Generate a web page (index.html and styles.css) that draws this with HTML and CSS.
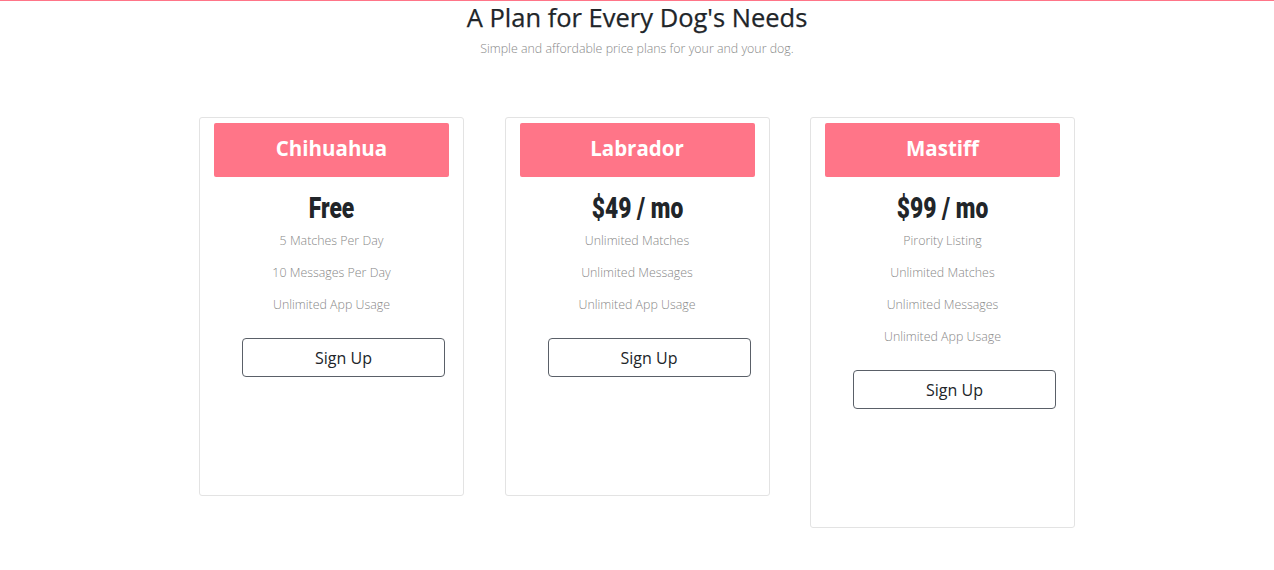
FILE: index.html
```html
<!DOCTYPE html>
<html lang="en">
<head>
<meta charset="utf-8">
<title>Pricing</title>
<link rel="stylesheet" href="styles.css">
</head>
<body>
<div class="topline"></div>
<section class="pricing">
  <h1 class="title">A Plan for Every Dog's Needs</h1>
  <p class="subtitle">Simple and affordable price plans for your and your dog.</p>
  <div class="cards">
    <div class="card">
      <div class="card-head">Chihuahua</div>
      <div class="price">Free</div>
      <ul class="features">
        <li>5 Matches Per Day</li>
        <li>10 Messages Per Day</li>
        <li>Unlimited App Usage</li>
      </ul>
      <button class="btn">Sign Up</button>
    </div>
    <div class="card">
      <div class="card-head">Labrador</div>
      <div class="price">$49 / mo</div>
      <ul class="features">
        <li>Unlimited Matches</li>
        <li>Unlimited Messages</li>
        <li>Unlimited App Usage</li>
      </ul>
      <button class="btn">Sign Up</button>
    </div>
    <div class="card">
      <div class="card-head">Mastiff</div>
      <div class="price">$99 / mo</div>
      <ul class="features">
        <li>Pirority Listing</li>
        <li>Unlimited Matches</li>
        <li>Unlimited Messages</li>
        <li>Unlimited App Usage</li>
      </ul>
      <button class="btn">Sign Up</button>
    </div>
  </div>
</section>
</body>
</html>
```

FILE: styles.css
```css
html, body {
  margin: 0;
  padding: 0;
  background: #ffffff;
}
body {
  font-family: "Open Sans", "Noto Sans", sans-serif;
  color: #212529;
}
.topline {
  height: 1px;
  background: #ff7588;
}
.pricing {
  display: flex;
  flex-direction: column;
  align-items: center;
}
.title {
  margin: 0;
  font-family: "Open Sans", sans-serif;
  font-weight: 500;
  font-size: 25.5px;
  line-height: 33px;
  color: #212529;
  -webkit-text-stroke: 0.25px #212529;
}
.subtitle {
  margin: 5px 0 0;
  font-family: "Open Sans", sans-serif;
  font-weight: 300;
  font-size: 12.4px;
  line-height: 20px;
  color: #888888;
}
.cards {
  display: flex;
  align-items: flex-start;
  gap: 40.5px;
  margin-top: 58px;
}
.card {
  width: 235px;
  padding: 5px 14px 118px;
  border: 1px solid #e3e3e3;
  border-radius: 3px;
  display: flex;
  flex-direction: column;
}
.card-head {
  height: 54px;
  line-height: 50px;
  background: #ff7588;
  border-radius: 2px;
  color: #ffffff;
  text-align: center;
  font-family: "Open Sans", sans-serif;
  font-weight: 700;
  font-size: 20.5px;
}
.price {
  margin-top: 14px;
  height: 34px;
  line-height: 33px;
  text-align: center;
  font-family: "Roboto", "DejaVu Sans", sans-serif;
  font-weight: 900;
  font-size: 30px;
  color: #212529;
  transform: scaleX(0.76);
}
.features {
  list-style: none;
  margin: 0;
  padding: 0;
}
.features li {
  line-height: 32px;
  height: 32px;
  text-align: center;
  font-family: "Open Sans", sans-serif;
  font-weight: 300;
  font-size: 12.4px;
  color: #888888;
}
.btn {
  margin: 17px 0 0 28px;
  width: 203px;
  height: 39px;
  box-sizing: border-box;
  background: #ffffff;
  border: 1px solid #5a6068;
  border-radius: 4px;
  font-family: "Open Sans", sans-serif;
  font-size: 16px;
  color: #212529;
  padding: 0;
}
```
